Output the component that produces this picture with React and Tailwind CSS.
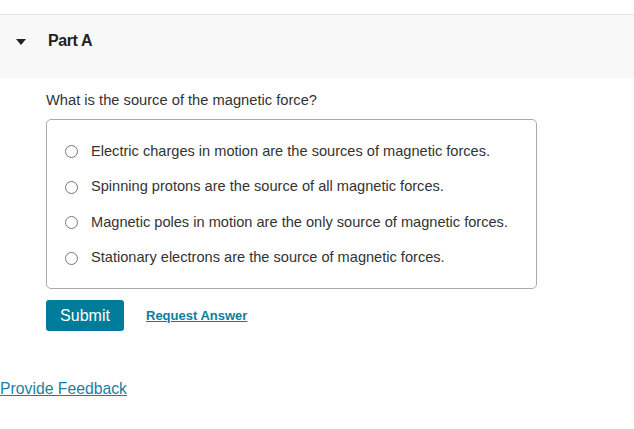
import React, { useState } from 'react';

const options = [
    'Electric charges in motion are the sources of magnetic forces.',
    'Spinning protons are the source of all magnetic forces.',
    'Magnetic poles in motion are the only source of magnetic forces.',
    'Stationary electrons are the source of magnetic forces.',
];

const App = () => {
    const [selected, setSelected] = useState(null);

    return (
        <div className="w-[634px] h-[429px] bg-white text-[#333] font-['Liberation_Sans',Arial,sans-serif]">
            <div className="h-[14px]" />
            <div className="border-t border-[#e3e3e3] bg-[#f8f8f8] h-[64px] flex items-start pt-[17px]">
                <svg className="ml-[16px] mr-[22px] mt-[7px]" width="10" height="6" viewBox="0 0 10 6">
                    <path d="M0 0 L10 0 L5 6 Z" fill="#222" />
                </svg>
                <h2 className="text-[16px] leading-[18px] font-bold text-[#222] tracking-[-0.4px]">Part A</h2>
            </div>

            <div className="pl-[46px]">
                <p className="mt-[14px] text-[14.7px] leading-[16px]">What is the source of the magnetic force?</p>

                <div className="mt-[11px] w-[491px] h-[170px] border border-[#aaa] rounded-[5px] pt-[14px] pl-[18px]">
                    {options.map((option, i) => (
                        <label
                            key={i}
                            className="flex items-center h-[35.5px] cursor-pointer text-[14.6px]"
                            onClick={() => setSelected(i)}
                        >
                            <span className="w-[13px] h-[13px] rounded-full border border-[#777] bg-white flex items-center justify-center mr-[13px]">
                                {selected === i && <span className="w-[7px] h-[7px] rounded-full bg-[#333]" />}
                            </span>
                            <span>{option}</span>
                        </label>
                    ))}
                </div>

                <div className="mt-[11px] flex items-center">
                    <button className="w-[78px] h-[31px] bg-[#007c9b] rounded-[3px] text-white text-[16px] leading-none">
                        Submit
                    </button>
                    <a href="#" className="ml-[22px] text-[13px] font-bold text-[#0e7c9d] underline">
                        Request Answer
                    </a>
                </div>
            </div>

            <div className="mt-[46px]">
                <a href="#" className="text-[15.75px] text-[#1a7fa3] underline">
                    Provide Feedback
                </a>
            </div>
        </div>
    );
};

export default App;
